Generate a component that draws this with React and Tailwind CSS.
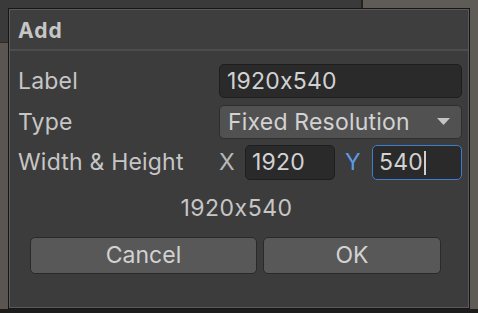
import React from "react";

export default function App() {
  return (
    <div className="relative w-[478px] h-[313px] overflow-hidden bg-[#5c5753] font-[Inter,'Noto_Sans',sans-serif] [font-feature-settings:'calt'_0]">
      {/* background */}
      <div className="flex flex-col h-full">
        <div className="flex flex-1">
          <div className="w-[361px] flex flex-col">
            <div className="h-[43px] bg-[#3a3a3a] border-b border-[#2a2a2a]" />
            <div className="flex-1 bg-[#5a5550]" />
          </div>
          <div className="w-[2px] bg-[#232323]" />
          <div className="flex-1 bg-[#5f5b57]" />
        </div>
        <div className="h-[4px] bg-[#1c1c1c]" />
      </div>

      {/* dialog */}
      <div className="absolute left-[8px] top-[8px] w-[462px] h-[301px] border border-[#161616]">
        <div className="h-full border border-[#5a5a5a] bg-[#3c3c3c] flex flex-col">
          <div className="h-[41px] shrink-0 flex items-center px-[8px] pt-[2px] border-b-2 border-[#4d4d4d] bg-[#3e3e3e]">
            <span className="text-[21px] font-bold text-[#c6c6c6] tracking-[1px]">Add</span>
          </div>
          <div className="flex flex-col pl-[8px] pr-[6px] pt-[13px] text-[23px] text-[#c6c6c6] tracking-[0.2px]">
            <div className="flex items-center h-[34px]">
              <span className="w-[201px] shrink-0">Label</span>
              <div className="w-[243px] shrink-0 h-[34px] rounded-[5px] bg-[#2a2a2a] border border-[#1e1e1e] flex items-center px-[7px] text-[#d2d2d2]">
                1920x540
              </div>
            </div>
            <div className="flex items-center h-[34px] mt-[7px]">
              <span className="w-[201px] shrink-0">Type</span>
              <div className="w-[243px] shrink-0 h-[34px] rounded-[5px] bg-[#515151] border border-[#2e2e2e] flex items-center justify-between pl-[8px] pr-[11px] text-[#d2d2d2]">
                <span>Fixed Resolution</span>
                <svg width="13" height="8" viewBox="0 0 13 8"><path d="M0 0 H13 L6.5 7 Z" fill="#c4c4c4" /></svg>
              </div>
            </div>
            <div className="flex items-center h-[35px] mt-[6px]">
              <span className="w-[201px] shrink-0 whitespace-nowrap">Width &amp; Height</span>
              <span className="w-[26px] shrink-0 text-[#b8b8b8]">X</span>
              <div className="w-[90px] shrink-0 h-[35px] rounded-[5px] bg-[#2a2a2a] border border-[#1e1e1e] flex items-center px-[6px] text-[#d2d2d2]">
                1920
              </div>
              <span className="w-[37px] shrink-0 pl-[10px] text-[#5c9ae6]">Y</span>
              <div className="w-[90px] shrink-0 h-[35px] rounded-[5px] bg-[#2a2a2a] border-[1.5px] border-[#3b7ed2] flex items-center px-[6px] text-[#d2d2d2]">
                540<span className="inline-block w-[2px] h-[24px] bg-[#d0d0d0] ml-[1px]" />
              </div>
            </div>
            <div className="h-[57px] flex items-center justify-center">
              <span className="ml-[-7px] tracking-[0.5px]">1920x540</span>
            </div>
          </div>
          <div className="flex px-[20px] gap-[6px]">
            <button className="w-[227px] h-[37px] rounded-[5px] bg-[#585858] border border-[#2a2a2a] text-[23px] text-[#d2d2d2]">Cancel</button>
            <button className="w-[178px] h-[37px] rounded-[5px] bg-[#585858] border border-[#2a2a2a] text-[23px] text-[#d2d2d2]">OK</button>
          </div>
        </div>
      </div>
    </div>
  );
}
